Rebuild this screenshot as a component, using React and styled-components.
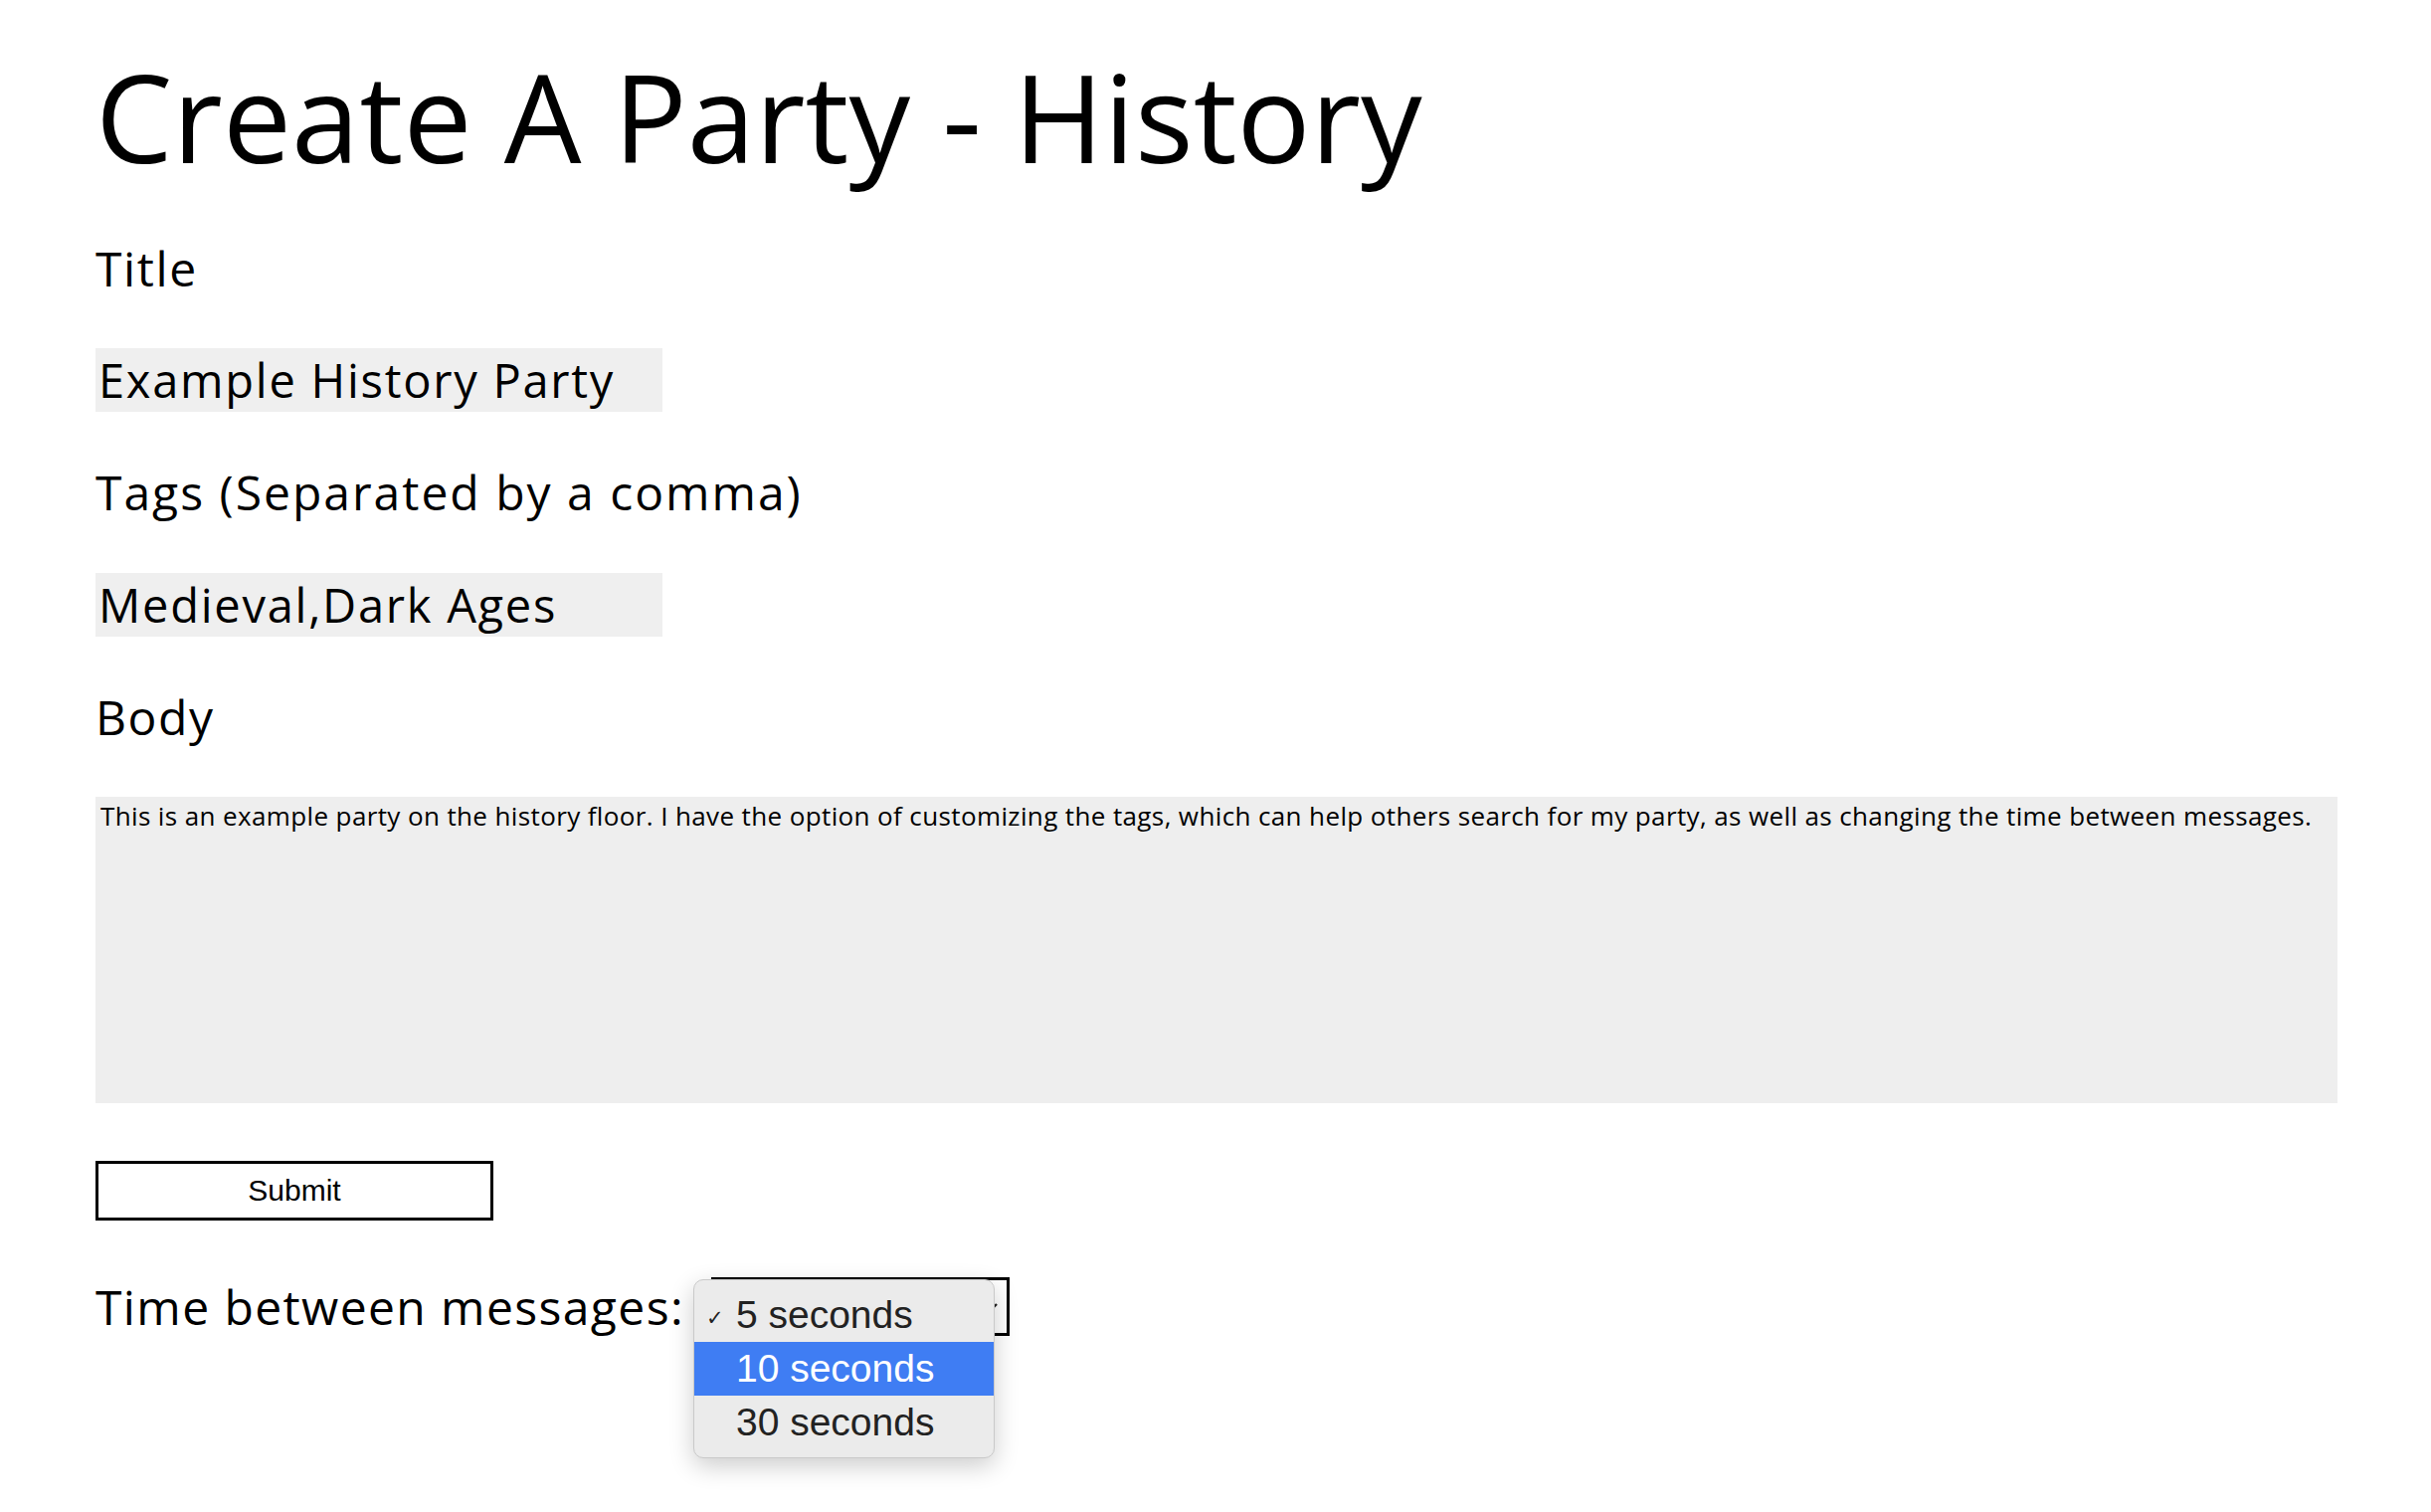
import React from "react";
import styled, { createGlobalStyle } from "styled-components";

const GlobalStyle = createGlobalStyle`
  html, body {
    margin: 0;
    padding: 0;
    background: #fff;
  }
  body {
    font-family: "Open Sans", "Lato", sans-serif;
    color: #000;
  }
`;

const Page = styled.div`
  box-sizing: border-box;
  min-height: 1520px;
  padding: 0 94px 40px 96px;
`;

const Heading = styled.h1`
  margin: 43px 0 0;
  font-size: 123px;
  font-weight: 400;
  line-height: 1.2;
  letter-spacing: 0.1px;
`;

const Form = styled.form`
  display: flex;
  flex-direction: column;
  align-items: flex-start;
  gap: 52px;
  margin-top: 50px;
`;

const Label = styled.label`
  display: block;
  font-size: 48px;
  line-height: 1.2;
  letter-spacing: ${(p) => p.$spacing || "1.6px"};
`;

const TextInput = styled.input`
  box-sizing: border-box;
  width: 570px;
  height: 64px;
  border: none;
  outline: none;
  background: #efefef;
  padding: 0 3px;
  font-family: "Open Sans", "Lato", sans-serif;
  font-size: 47px;
  letter-spacing: 1.75px;
  color: #000;
`;

const BodyArea = styled.textarea`
  box-sizing: border-box;
  width: 100%;
  height: 308px;
  border: none;
  outline: none;
  resize: none;
  background: #eeeeee;
  padding: 4px 5px;
  font-family: "Open Sans", "Lato", sans-serif;
  font-size: 26px;
  line-height: 1.2;
  letter-spacing: 0.38px;
  color: #000;
`;

const SubmitButton = styled.button`
  box-sizing: border-box;
  width: 400px;
  height: 60px;
  margin-top: 6px;
  background: #fff;
  border: 3px solid #000;
  font-family: "Liberation Sans", Arial, sans-serif;
  font-size: 30px;
  color: #000;
`;

const TimeRow = styled.div`
  display: flex;
  align-items: center;
  gap: 27px;
  margin-top: 5px;
`;

const SelectBox = styled.div`
  position: relative;
  box-sizing: border-box;
  width: 300px;
  height: 59px;
  border: 3px solid #000;
  background: #fff;
`;

const Chevron = styled.svg`
  position: absolute;
  right: 8px;
  top: 50%;
  transform: translateY(-50%);
`;

const Popup = styled.ul`
  position: absolute;
  left: -21px;
  top: -1px;
  width: 303px;
  margin: 0;
  padding: 8px 0;
  list-style: none;
  box-sizing: border-box;
  background: #ebebeb;
  border: 1px solid #c9c9c9;
  border-radius: 10px;
  box-shadow: 0 8px 24px rgba(0, 0, 0, 0.2);
  z-index: 2;
`;

const Option = styled.li`
  position: relative;
  height: 54px;
  display: flex;
  align-items: center;
  padding-left: 42px;
  font-family: "Liberation Sans", Arial, sans-serif;
  font-size: 39px;
  color: ${(p) => (p.$active ? "#fff" : "#222")};
  background: ${(p) => (p.$active ? "#3f7df3" : "transparent")};
`;

const Check = styled.span`
  position: absolute;
  left: 12px;
  top: 50%;
  transform: translateY(-38%);
  font-family: "DejaVu Sans", sans-serif;
  font-size: 21px;
  color: #222;
`;

const options = [
  { label: "5 seconds", checked: true },
  { label: "10 seconds", active: true },
  { label: "30 seconds" },
];

export default function App() {
  return (
    <Page>
      <GlobalStyle />
      <Heading>Create A Party - History</Heading>
      <Form onSubmit={(e) => e.preventDefault()}>
        <Label htmlFor="title">Title</Label>
        <TextInput id="title" defaultValue="Example History Party" />
        <Label htmlFor="tags" $spacing="2px">
          Tags (Separated by a comma)
        </Label>
        <TextInput id="tags" defaultValue="Medieval,Dark Ages" />
        <Label htmlFor="body">Body</Label>
        <BodyArea
          id="body"
          defaultValue="This is an example party on the history floor. I have the option of customizing the tags, which can help others search for my party, as well as changing the time between messages."
        />
        <SubmitButton type="submit">Submit</SubmitButton>
        <TimeRow>
          <Label as="span" $spacing="1.4px">
            Time between messages:
          </Label>
          <SelectBox>
            <Chevron width="16" height="12" viewBox="0 0 16 12">
              <path d="M2 3l6 6 6-6" fill="none" stroke="#222" strokeWidth="2.4" />
            </Chevron>
            <Popup>
              {options.map((o) => (
                <Option key={o.label} $active={o.active}>
                  {o.checked && <Check>✓</Check>}
                  {o.label}
                </Option>
              ))}
            </Popup>
          </SelectBox>
        </TimeRow>
      </Form>
    </Page>
  );
}
